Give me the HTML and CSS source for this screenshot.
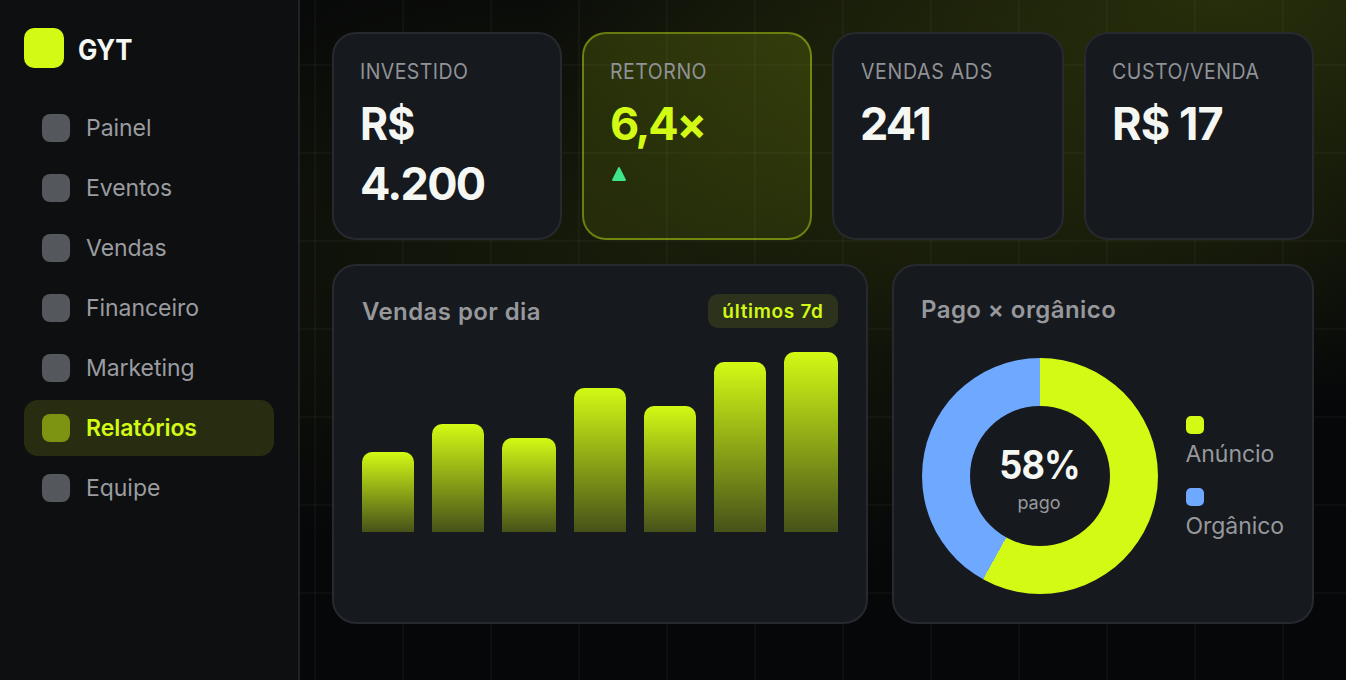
FILE: index.html
```html
<!DOCTYPE html>
<html lang="pt-BR">
<head>
<meta charset="utf-8">
<title>GYT – Relatórios</title>
<link rel="stylesheet" href="styles.css">
</head>
<body>
<div class="app">
  <aside class="sidebar">
    <div class="brand"><span class="brand-mark"></span><span class="brand-name">GYT</span></div>
    <nav class="nav">
      <a class="nav-item"><i class="nav-icon"></i>Painel</a>
      <a class="nav-item"><i class="nav-icon"></i>Eventos</a>
      <a class="nav-item"><i class="nav-icon"></i>Vendas</a>
      <a class="nav-item"><i class="nav-icon"></i>Financeiro</a>
      <a class="nav-item"><i class="nav-icon"></i>Marketing</a>
      <a class="nav-item active"><i class="nav-icon"></i>Relatórios</a>
      <a class="nav-item"><i class="nav-icon"></i>Equipe</a>
    </nav>
  </aside>
  <main class="main">
    <section class="stats">
      <div class="card stat"><div class="label l-inv">INVESTIDO</div><div class="value"><span class="v-rs">R$</span> <span class="v-num">4.200</span></div></div>
      <div class="card stat highlight"><div class="label l-ret">RETORNO</div><div class="value v-ret">6,4×</div>
        <svg class="trend" viewBox="0 0 14 14"><path d="M7 1 L13 13 H1 Z" fill="#3ee68c" stroke="#3ee68c" stroke-width="1.8" stroke-linejoin="round"/></svg></div>
      <div class="card stat"><div class="label l-ads">VENDAS ADS</div><div class="value v-ads">241</div></div>
      <div class="card stat"><div class="label l-cost">CUSTO/VENDA</div><div class="value v-cost">R$ 17</div></div>
    </section>
    <section class="charts">
      <div class="card panel">
        <div class="panel-head"><h2 class="title">Vendas por dia</h2><span class="chip">últimos 7d</span></div>
        <div class="bars">
          <div class="bar" style="height:80px"></div>
          <div class="bar" style="height:108px"></div>
          <div class="bar" style="height:94px"></div>
          <div class="bar" style="height:144px"></div>
          <div class="bar" style="height:126px"></div>
          <div class="bar" style="height:170px"></div>
          <div class="bar" style="height:180px"></div>
        </div>
      </div>
      <div class="card panel">
        <h2 class="title title-split">Pago × orgânico</h2>
        <div class="split">
          <div class="donut"><div class="hole"><b class="pct">58%</b><span class="pct-label">pago</span></div></div>
          <div class="legend">
            <div class="legend-item"><i class="swatch lime"></i><span>Anúncio</span></div>
            <div class="legend-item"><i class="swatch blue"></i><span>Orgânico</span></div>
          </div>
        </div>
      </div>
    </section>
  </main>
</div>
</body>
</html>
```
FILE: styles.css
```css
* { box-sizing: border-box; }
body { margin: 0; background: #060709; color: #f5f7f2; font-family: Inter, sans-serif; }
.app { display: flex; width: 1346px; height: 680px; overflow: hidden; }

.sidebar { width: 300px; flex: none; padding: 28px 24px; background: #0e0f11; border-right: 2px solid #202224; }
.brand { display: flex; align-items: center; gap: 14px; height: 40px; }
.brand-mark { width: 40px; height: 40px; border-radius: 10px; background: #d2fa14; }
.brand-name { font-size: 29px; font-weight: 700; letter-spacing: -0.3px; padding-top: 3px; transform: scaleX(.89); transform-origin: left; }
.nav { display: flex; flex-direction: column; gap: 4px; margin-top: 32px; }
.nav-item { display: flex; align-items: center; gap: 16px; height: 56px; width: 250px; padding: 0 18px; border-radius: 14px; font-size: 23px; letter-spacing: -0.05px; color: #9a9ca0; }
.nav-icon { width: 28px; height: 28px; border-radius: 8px; background: #54575b; }
.nav-item.active { background: #282d12; color: #d2fa14; font-weight: 600; letter-spacing: -0.05px; }
.active .nav-icon { background: #7d9413; }

.main {
  flex: 1; min-width: 0; padding: 32px; display: flex; flex-direction: column; gap: 24px;
  background:
    linear-gradient(90deg, rgba(255,255,255,.028) 2px, transparent 2px) 14px 0 / 88px 88px,
    linear-gradient(rgba(255,255,255,.028) 2px, transparent 2px) 0 64px / 88px 88px,
    radial-gradient(680px 430px at 920px -20px, rgba(210,250,20,.17), transparent),
    radial-gradient(680px 340px at 370px 250px, rgba(210,250,20,.09), transparent),
    #060709;
}
.card { background: #16191e; border: 2px solid #26292d; border-radius: 24px; }
.stats { display: grid; grid-template-columns: 230px 230px 232px 230px; gap: 20px; height: 208px; }
.stat { padding: 24px 26px; }
.highlight { background: linear-gradient(rgba(210,250,20,.14), rgba(210,250,20,.08)); border-color: rgba(210,250,20,.4); }
.label { height: 28px; line-height: 28px; font-size: 21px; color: #909296; white-space: nowrap; transform: scaleX(.93); transform-origin: left; }
.l-inv { letter-spacing: 0.45px; }
.l-ret { letter-spacing: 0.55px; }
.l-ads { letter-spacing: 0.75px; padding-left: 1px; }
.l-cost { letter-spacing: 0.6px; }
.value { margin-top: 8px; font-size: 45px; line-height: 60px; font-weight: 700; white-space: nowrap; }
.v-rs { display: block; letter-spacing: -1px; transform: scaleX(.95); transform-origin: left; }
.v-num { display: block; letter-spacing: -1.7px; }
.v-ret { color: #d2fa14; letter-spacing: -2.3px; }
.v-ads { letter-spacing: -1.9px; }
.v-cost { letter-spacing: -0.9px; }
.trend { display: block; width: 14px; height: 14px; margin: 13px 0 0 2px; }

.charts { display: grid; grid-template-columns: minmax(0, 536fr) minmax(0, 422fr); gap: 24px; height: 360px; }
.panel { padding: 28px; }
.panel-head { display: flex; justify-content: space-between; align-items: center; height: 34px; }
.title { margin: 0; font-size: 24px; line-height: 32px; font-weight: 600; letter-spacing: 0.42px; color: #96989c; }
.panel-head .title { padding-top: 2px; }
.title-split { margin-left: -1px; }
.chip { width: 130px; height: 34px; border-radius: 10px; background: #2c321c; color: #d2fa14; font-size: 19px; font-weight: 600; letter-spacing: 0.7px; line-height: 35px; text-align: center; }
.bars { display: grid; grid-template-columns: 52px 52px 54px 52px 52px 52px 54px; justify-content: space-between; align-items: end; height: 180px; margin-top: 24px; }
.bar { border-radius: 10px 10px 0 0; background: linear-gradient(#d2fa14, #465219); }
.split { display: flex; align-items: center; gap: 27.5px; margin-top: 32px; }
.donut { width: 236px; height: 236px; flex: none; border-radius: 50%; background: conic-gradient(#d2fa14 58%, #6ea8ff 0); display: grid; place-items: center; }
.hole { width: 140px; height: 140px; border-radius: 50%; background: #16191e; display: flex; flex-direction: column; align-items: center; justify-content: center; padding-top: 9px; }
.pct { font-size: 39px; line-height: 44px; letter-spacing: -1px; margin-left: -2px; transform: scaleX(.925); }
.pct-label { font-size: 18px; line-height: 30px; color: #96989c; margin-left: -2px; padding-top: 1px; }
.legend { display: flex; flex-direction: column; gap: 16px; padding-top: 8px; font-size: 23px; letter-spacing: -0.05px; line-height: 41px; color: #96989c; }
.legend-item { display: flex; flex-direction: column; height: 56px; }
.swatch { width: 18px; height: 18px; border-radius: 5px; flex: none; }
.lime { background: #d2fa14; }
.blue { background: #6ea8ff; }
```
